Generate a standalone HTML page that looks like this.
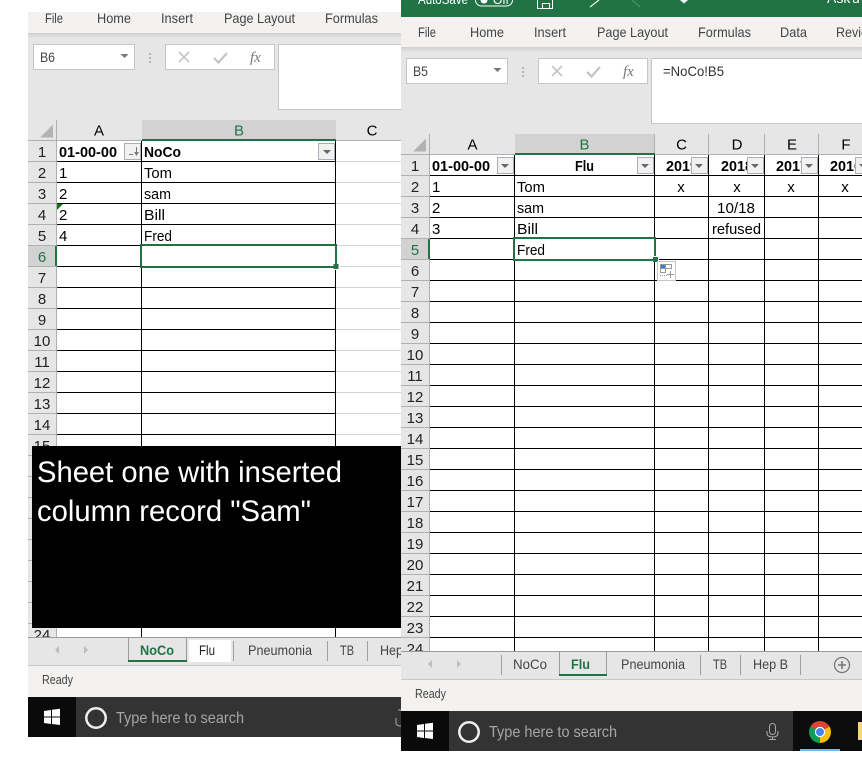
<!DOCTYPE html>
<html><head><meta charset="utf-8"><title>Excel sheets</title>
<style>
html,body{margin:0;padding:0;background:#fff;width:862px;height:761px;overflow:hidden}
svg{display:block}
text{font-family:"Liberation Sans",sans-serif;font-size:15px;fill:#000}
.c{text-anchor:middle}
.b{font-weight:bold}
.m text,.m{font-size:14px;fill:#444}
.r text{text-anchor:middle;fill:#222}
.g{fill:#217346}
.t text{font-size:14px;fill:#444}
.s{font-size:16px;fill:#a6a6a6}
.st{font-size:12.500px;fill:#444}
</style></head><body>
<svg width="862" height="761" viewBox="0 0 862 761" xmlns="http://www.w3.org/2000/svg">
<defs>
<linearGradient id="sh" x1="0" y1="0" x2="0" y2="1"><stop offset="0" stop-color="#cfcfcf"/><stop offset="1" stop-color="#e6e6e6"/></linearGradient>
</defs>
<rect width="862" height="761" fill="#fff"/>

<!-- LEFT WINDOW -->
<g>
<rect x="28" y="12" width="373" height="21" fill="#f3f2f1"/>
<rect x="28" y="33" width="373" height="87" fill="#e6e6e6"/>
<rect x="28" y="33" width="373" height="5" fill="url(#sh)"/>
<g class="m">
<text x="45" y="23" textLength="18" lengthAdjust="spacingAndGlyphs">File</text>
<text x="97" y="23" textLength="34" lengthAdjust="spacingAndGlyphs">Home</text>
<text x="161" y="23" textLength="32" lengthAdjust="spacingAndGlyphs">Insert</text>
<text x="224" y="23" textLength="71" lengthAdjust="spacingAndGlyphs">Page Layout</text>
<text x="325" y="23" textLength="53" lengthAdjust="spacingAndGlyphs">Formulas</text>
</g>
<rect x="33.500" y="44.500" width="101" height="25" fill="#fff" stroke="#c6c6c6"/>
<text x="40" y="62" textLength="15" lengthAdjust="spacingAndGlyphs" style="font-size:14px;fill:#444">B6</text>
<path d="M120.500 54H128.500L124.500 58Z" fill="#777"/>
<path d="M149 53h2v2h-2zM149 57h2v2h-2zM149 61h2v2h-2z" fill="#b5b5b5"/>
<rect x="165.500" y="44.500" width="109" height="25" fill="#fff" stroke="#c6c6c6"/>
<path d="M179 52L189 62M189 52L179 62" stroke="#c4c4c4" stroke-width="1.600" fill="none"/>
<path d="M214 58L218.500 62.500L227 53" stroke="#c4c4c4" stroke-width="2.200" fill="none"/>
<text x="250" y="62" style="font-family:'Liberation Serif',serif;font-style:italic;font-size:15px;fill:#777">fx</text>
<rect x="278.500" y="44.500" width="130" height="65" fill="#fff" stroke="#c6c6c6"/>

<!-- sheet -->
<rect x="28" y="120" width="373" height="20" fill="#e6e6e6"/>
<rect x="57" y="141" width="344" height="497" fill="#fff"/>
<rect x="28" y="141" width="28" height="497" fill="#e6e6e6"/>
<rect x="142" y="120" width="194" height="20" fill="#d2d2d2"/>
<rect x="28" y="246" width="28" height="20" fill="#d2d2d2"/>
<path d="M40 137.500L53 124.500V137.500Z" fill="#b3b3b3"/>
<path d="M336 161.500H401M336 182.500H401M336 203.500H401M336 224.500H401M336 245.500H401M336 266.500H401M336 287.500H401M336 308.500H401M336 329.500H401M336 350.500H401M336 371.500H401M336 392.500H401M336 413.500H401M336 434.500H401" stroke="#d4d4d4" fill="none"/>
<path d="M28 140.500H401M28 161.500H56M28 182.500H56M28 203.500H56M28 224.500H56M28 245.500H56M28 266.500H56M28 287.500H56M28 308.500H56M28 329.500H56M28 350.500H56M28 371.500H56M28 392.500H56M28 413.500H56M28 434.500H56M28 455.500H56M28 476.500H56M28 497.500H56M28 518.500H56M28 539.500H56M28 560.500H56M28 581.500H56M28 602.500H56M28 623.500H56M56.500 120V638" stroke="#b0b0b0" fill="none"/>
<path d="M57 161.500H336M57 182.500H336M57 203.500H336M57 224.500H336M57 245.500H336M57 266.500H336M57 287.500H336M57 308.500H336M57 329.500H336M57 350.500H336M57 371.500H336M57 392.500H336M57 413.500H336M57 434.500H336M141.500 141V638M335.500 141V638" stroke="#000" fill="none"/>
<rect x="142" y="139" width="194" height="2" fill="#217346"/>
<rect x="55" y="246" width="2" height="20" fill="#217346"/>
<text class="c" x="99" y="135.500">A</text>
<text class="c g" x="239" y="135.500" style="fill:#217346">B</text>
<text class="c" x="372" y="135.500">C</text>
<g class="r">
<text x="42" y="157">1</text><text x="42" y="178">2</text><text x="42" y="199">3</text><text x="42" y="220">4</text><text x="42" y="241">5</text>
<text x="42" y="262" style="fill:#217346">6</text><text x="42" y="283">7</text><text x="42" y="304">8</text><text x="42" y="325">9</text><text x="42" y="346">10</text>
<text x="42" y="367">11</text><text x="42" y="388">12</text><text x="42" y="409">13</text><text x="42" y="430">14</text><text x="42" y="451">15</text><text x="42" y="640">24</text>
</g>
<text class="b" x="59" y="157" textLength="58" lengthAdjust="spacingAndGlyphs">01-00-00</text>
<text class="b" x="144" y="157" textLength="37" lengthAdjust="spacingAndGlyphs">NoCo</text>
<text x="59" y="178">1</text><text x="59" y="199">2</text><text x="59" y="220">2</text><text x="59" y="241">4</text>
<text x="144" y="178" textLength="28" lengthAdjust="spacingAndGlyphs">Tom</text>
<text x="144" y="199" textLength="27" lengthAdjust="spacingAndGlyphs">sam</text>
<text x="144" y="220" textLength="21" lengthAdjust="spacingAndGlyphs">Bill</text>
<text x="144" y="241" textLength="28" lengthAdjust="spacingAndGlyphs">Fred</text>
<path d="M57 204H63L57 210Z" fill="#137a13"/>
<rect x="124.500" y="143.500" width="16" height="16" fill="#f1f1f1" stroke="#a9afb9"/>
<path d="M129 154.500H133M136.500 147V154M135 152.500L136.500 155L138 152.500Z" stroke="#777" fill="none"/>
<rect x="318.500" y="143.500" width="16" height="16" fill="#f1f1f1" stroke="#a9afb9"/>
<path d="M323 150H331L327 154Z" fill="#666"/>
<rect x="141" y="245" width="195" height="22" fill="none" stroke="#217346" stroke-width="2"/>
<rect x="334" y="264" width="6" height="6" fill="#fff"/>
<rect x="333.500" y="264" width="5" height="5" fill="#217346"/>
</g>

<!-- Black caption -->
<rect x="32" y="446" width="369" height="182" fill="#000"/>
<text x="37" y="482" textLength="305" lengthAdjust="spacingAndGlyphs" style="font-size:30px;fill:#fff">Sheet one with inserted</text>
<text x="37" y="521" textLength="274" lengthAdjust="spacingAndGlyphs" style="font-size:30px;fill:#fff">column record "Sam"</text>

<!-- left tabs -->
<g>
<rect x="28" y="637" width="373" height="28" fill="#e6e6e6"/>
<path d="M28 637.500H401" stroke="#9b9b9b" fill="none"/>
<rect x="28" y="665" width="373" height="1" fill="#c8c8c8"/>
<path d="M128.500 637V662M186.500 637V662" stroke="#9b9b9b" fill="none"/>
<rect x="128" y="660" width="59" height="2" fill="#217346"/>
<rect x="189" y="640" width="42" height="22" fill="#fff"/>
<path d="M59 646V654L55 650ZM84 646V654L88 650Z" fill="#bdbdbd"/>
<path d="M233.500 641V661M327.500 641V661M367.500 641V661" stroke="#a0a0a0" fill="none"/>
<g class="t">
<text x="140" y="655" textLength="34" lengthAdjust="spacingAndGlyphs" style="font-weight:bold;fill:#217346">NoCo</text>
<text x="199" y="655" textLength="16" lengthAdjust="spacingAndGlyphs" style="fill:#222">Flu</text>
<text x="248" y="655" textLength="64" lengthAdjust="spacingAndGlyphs">Pneumonia</text>
<text x="340" y="655" textLength="14" lengthAdjust="spacingAndGlyphs">TB</text>
<text x="380" y="655" textLength="23" lengthAdjust="spacingAndGlyphs">Hep</text>
</g>
<rect x="28" y="666" width="373" height="31" fill="#f3f2f1"/>
<text class="st" x="42" y="684" textLength="31" lengthAdjust="spacingAndGlyphs">Ready</text>
<rect x="28" y="697" width="48" height="40" fill="#0a0a0a"/>
<rect x="76" y="697" width="325" height="40" fill="#333"/>
<path d="M44 711L51 710V716.500H44ZM52 709.800L60 708.700V716.500H52ZM44 717.500H51V724L44 723ZM52 717.500H60V725L52 724Z" fill="#fff"/>
<circle cx="96" cy="718" r="9.700" fill="none" stroke="#eee" stroke-width="2.500"/>
<text class="s" x="116" y="723" textLength="128" lengthAdjust="spacingAndGlyphs">Type here to search</text>
<path d="M398 710H401M396 718V723Q396 726 401 726" stroke="#999" stroke-width="1.200" fill="none"/>
</g>

<!-- RIGHT WINDOW -->
<g>
<rect x="401" y="0" width="461" height="17" fill="#217346"/>
<text x="418" y="4" textLength="50" lengthAdjust="spacingAndGlyphs" style="font-size:14px;fill:#fff">AutoSave</text>
<rect x="475.500" y="-6" width="37" height="12" rx="6" fill="none" stroke="#fff"/>
<circle cx="484" cy="0" r="3.500" fill="#fff"/>
<text x="493" y="4" style="font-size:12px;fill:#fff">Off</text>
<path d="M537.500 -2V8.500H552.500V-2M542.500 8.500V3.500H549.500V8.500" stroke="#fff" fill="none"/>
<path d="M590 7L599 0" stroke="#e4efe8" stroke-width="1.300" fill="none"/>
<path d="M632 0L640 7" stroke="#4f9170" stroke-width="1.200" fill="none"/>
<path d="M680 0H688L684 3.500Z" fill="#fff"/>
<text x="827" y="3" style="font-size:14px;fill:#fff">Ask</text>
<text x="852" y="3" style="font-size:14px;fill:#fff">u</text>
<rect x="401" y="17" width="461" height="30" fill="#f3f2f1"/>
<rect x="401" y="47" width="461" height="87" fill="#e6e6e6"/>
<rect x="401" y="47" width="461" height="5" fill="url(#sh)"/>
<g class="m">
<text x="418" y="37" textLength="18" lengthAdjust="spacingAndGlyphs">File</text>
<text x="470" y="37" textLength="34" lengthAdjust="spacingAndGlyphs">Home</text>
<text x="534" y="37" textLength="32" lengthAdjust="spacingAndGlyphs">Insert</text>
<text x="597" y="37" textLength="71" lengthAdjust="spacingAndGlyphs">Page Layout</text>
<text x="698" y="37" textLength="53" lengthAdjust="spacingAndGlyphs">Formulas</text>
<text x="780" y="37" textLength="27" lengthAdjust="spacingAndGlyphs">Data</text>
<text x="836" y="37" textLength="41" lengthAdjust="spacingAndGlyphs">Review</text>
</g>
<rect x="406.500" y="58.500" width="101" height="25" fill="#fff" stroke="#c6c6c6"/>
<text x="413" y="76" textLength="15" lengthAdjust="spacingAndGlyphs" style="font-size:14px;fill:#444">B5</text>
<path d="M493.500 68H501.500L497.500 72Z" fill="#777"/>
<path d="M522 67h2v2h-2zM522 71h2v2h-2zM522 75h2v2h-2z" fill="#b5b5b5"/>
<rect x="538.500" y="58.500" width="109" height="25" fill="#fff" stroke="#c6c6c6"/>
<path d="M552 66L562 76M562 66L552 76" stroke="#c4c4c4" stroke-width="1.600" fill="none"/>
<path d="M587 72L591.500 76.500L600 67" stroke="#c4c4c4" stroke-width="2.200" fill="none"/>
<text x="623" y="76" style="font-family:'Liberation Serif',serif;font-style:italic;font-size:15px;fill:#777">fx</text>
<rect x="651.500" y="58.500" width="220" height="65" fill="#fff" stroke="#c6c6c6"/>
<text x="663" y="76" textLength="61" lengthAdjust="spacingAndGlyphs" style="font-size:14px;fill:#333">=NoCo!B5</text>

<rect x="401" y="134" width="461" height="20" fill="#e6e6e6"/>
<rect x="430" y="155" width="432" height="497" fill="#fff"/>
<rect x="401" y="155" width="28" height="497" fill="#e6e6e6"/>
<rect x="515" y="134" width="140" height="20" fill="#d2d2d2"/>
<rect x="401" y="239" width="28" height="20" fill="#d2d2d2"/>
<path d="M413 151.500L426 138.500V151.500Z" fill="#b3b3b3"/>
<path d="M401 154.500H862M401 175.500H429M401 196.500H429M401 217.500H429M401 238.500H429M401 259.500H429M401 280.500H429M401 301.500H429M401 322.500H429M401 343.500H429M401 364.500H429M401 385.500H429M401 406.500H429M401 427.500H429M401 448.500H429M401 469.500H429M401 490.500H429M401 511.500H429M401 532.500H429M401 553.500H429M401 574.500H429M401 595.500H429M401 616.500H429M401 637.500H429M429.500 134V652M654.500 134V154M708.500 134V154M764.500 134V154M818.500 134V154" stroke="#b0b0b0" fill="none"/>
<path d="M430 175.500H862M430 196.500H862M430 217.500H862M430 238.500H862M430 259.500H862M430 280.500H862M430 301.500H862M430 322.500H862M430 343.500H862M430 364.500H862M430 385.500H862M430 406.500H862M430 427.500H862M430 448.500H862M430 469.500H862M430 490.500H862M430 511.500H862M430 532.500H862M430 553.500H862M430 574.500H862M430 595.500H862M430 616.500H862M430 637.500H862M514.500 155V652M654.500 155V652M708.500 155V652M764.500 155V652M818.500 155V652" stroke="#000" fill="none"/>
<rect x="515" y="153" width="140" height="2" fill="#217346"/>
<rect x="428" y="239" width="2" height="20" fill="#217346"/>
<text class="c" x="472.500" y="149.500">A</text>
<text class="c" x="584.500" y="149.500" style="fill:#217346">B</text>
<text class="c" x="681.500" y="149.500">C</text>
<text class="c" x="737" y="149.500">D</text>
<text class="c" x="792" y="149.500">E</text>
<text class="c" x="846" y="149.500">F</text>
<g class="r">
<text x="415" y="171">1</text><text x="415" y="192">2</text><text x="415" y="213">3</text><text x="415" y="234">4</text>
<text x="415" y="255" style="fill:#217346">5</text><text x="415" y="276">6</text><text x="415" y="297">7</text><text x="415" y="318">8</text><text x="415" y="339">9</text>
<text x="415" y="360">10</text><text x="415" y="381">11</text><text x="415" y="402">12</text><text x="415" y="423">13</text><text x="415" y="444">14</text><text x="415" y="465">15</text>
<text x="415" y="486">16</text><text x="415" y="507">17</text><text x="415" y="528">18</text><text x="415" y="549">19</text><text x="415" y="570">20</text>
<text x="415" y="591">21</text><text x="415" y="612">22</text><text x="415" y="633">23</text><text x="415" y="654">24</text>
</g>
<text class="b" x="432" y="171" textLength="58" lengthAdjust="spacingAndGlyphs">01-00-00</text>
<text class="b" x="575" y="171" textLength="19" lengthAdjust="spacingAndGlyphs">Flu</text>
<text class="b" x="666" y="171" textLength="32" lengthAdjust="spacingAndGlyphs">2019</text>
<text class="b" x="721" y="171" textLength="32" lengthAdjust="spacingAndGlyphs">2018</text>
<text class="b" x="776" y="171" textLength="32" lengthAdjust="spacingAndGlyphs">2017</text>
<text class="b" x="830" y="171" textLength="32" lengthAdjust="spacingAndGlyphs">2016</text>
<text x="432" y="192">1</text><text x="432" y="213">2</text><text x="432" y="234">3</text>
<text x="517" y="192" textLength="28" lengthAdjust="spacingAndGlyphs">Tom</text>
<text x="517" y="213" textLength="27" lengthAdjust="spacingAndGlyphs">sam</text>
<text x="517" y="234" textLength="21" lengthAdjust="spacingAndGlyphs">Bill</text>
<text x="517" y="255" textLength="28" lengthAdjust="spacingAndGlyphs">Fred</text>
<text class="c" x="681" y="192">x</text><text class="c" x="737" y="192">x</text><text class="c" x="791" y="192">x</text><text class="c" x="845" y="192">x</text>
<text x="717" y="213" textLength="38" lengthAdjust="spacingAndGlyphs">10/18</text>
<text x="712" y="234" textLength="49" lengthAdjust="spacingAndGlyphs">refused</text>
<g fill="#f1f1f1" stroke="#a9afb9">
<rect x="497.500" y="157.500" width="16" height="16"/>
<rect x="637.500" y="157.500" width="16" height="16"/>
<rect x="691.500" y="157.500" width="16" height="16"/>
<rect x="747.500" y="157.500" width="16" height="16"/>
<rect x="801.500" y="157.500" width="16" height="16"/>
<rect x="855.500" y="157.500" width="16" height="16"/>
</g>
<path d="M501 164H509L505 168ZM641 164H649L645 168ZM695 164H703L699 168ZM751 164H759L755 168ZM805 164H813L809 168ZM859 164H867L863 168Z" fill="#666"/>
<rect x="514" y="238" width="141" height="22" fill="none" stroke="#217346" stroke-width="2"/>
<rect x="653" y="256" width="6" height="6" fill="#fff"/>
<rect x="653" y="257" width="5" height="5" fill="#217346"/>
<rect x="657.500" y="261.500" width="18" height="19" fill="#fff" stroke="#c6c6c6"/>
<rect x="660" y="264" width="6" height="5" fill="#3b7ddd"/>
<path d="M660.500 264.500H671.500V268.500H660.500ZM660.500 268.500V272.500H666M665.500 264.500V272.500" fill="none" stroke="#999"/>
<path d="M660 275.500H667" stroke="#999" stroke-dasharray="1 1" fill="none"/>
<path d="M670.500 271V278M667 274.500H674" stroke="#999" fill="none"/>

<!-- right tabs -->
<rect x="401" y="651" width="461" height="28" fill="#e6e6e6"/>
<path d="M401 651.500H862" stroke="#9b9b9b" fill="none"/>
<rect x="401" y="679" width="461" height="1" fill="#c8c8c8"/>
<path d="M559.500 651V676M606.500 651V676" stroke="#9b9b9b" fill="none"/>
<rect x="559" y="674" width="48" height="2" fill="#217346"/>
<path d="M432 660V668L428 664ZM457 660V668L461 664Z" fill="#bdbdbd"/>
<path d="M501.500 655V675M700.500 655V675M740.500 655V675M800.500 655V675" stroke="#a0a0a0" fill="none"/>
<g class="t">
<text x="513" y="669" textLength="34" lengthAdjust="spacingAndGlyphs">NoCo</text>
<text x="571" y="669" textLength="19" lengthAdjust="spacingAndGlyphs" style="font-weight:bold;fill:#217346">Flu</text>
<text x="621" y="669" textLength="64" lengthAdjust="spacingAndGlyphs">Pneumonia</text>
<text x="713" y="669" textLength="14" lengthAdjust="spacingAndGlyphs">TB</text>
<text x="753" y="669" textLength="35" lengthAdjust="spacingAndGlyphs">Hep B</text>
</g>
<circle cx="842" cy="665" r="7.500" fill="none" stroke="#777" stroke-width="1.300"/>
<path d="M838 665H846M842 661V669" stroke="#777" stroke-width="1.600" fill="none"/>
<rect x="401" y="680" width="461" height="31" fill="#f3f2f1"/>
<text class="st" x="415" y="698" textLength="31" lengthAdjust="spacingAndGlyphs">Ready</text>
<rect x="401" y="711" width="48" height="40" fill="#0a0a0a"/>
<rect x="449" y="711" width="344" height="40" fill="#333"/>
<rect x="793" y="711" width="69" height="40" fill="#0c0c0c"/>
<path d="M417 725L424 724V730.500H417ZM425 723.800L433 722.700V730.500H425ZM417 731.500H424V738L417 737ZM425 731.500H433V739L425 738Z" fill="#fff"/>
<circle cx="469" cy="732" r="9.700" fill="none" stroke="#eee" stroke-width="2.500"/>
<text class="s" x="489" y="737" textLength="128" lengthAdjust="spacingAndGlyphs">Type here to search</text>
<rect x="769.500" y="723.500" width="6" height="11" rx="3" fill="none" stroke="#aaa"/>
<path d="M767 731V733Q767 737 772.500 737Q778 737 778 733V731M772.500 737V739.500M769 739.500H776" stroke="#aaa" fill="none"/>
<path d="M820 732L810.500 726.500A11 11 0 0 1 829.500 726.500Z" fill="#db4437"/>
<path d="M820 732L810.500 726.500A11 11 0 0 0 820 743Z" fill="#0f9d58"/>
<path d="M820 732L829.500 726.500A11 11 0 0 1 820 743Z" fill="#f4c20d"/>
<circle cx="820" cy="732" r="5.200" fill="#fff"/>
<circle cx="820" cy="732" r="4" fill="#4285f4"/>
<rect x="800" y="749" width="40" height="2" fill="#76b9ed"/>
<rect x="858" y="722" width="4" height="18" fill="#f5d77a"/>
</g>
</svg>
</body></html>
